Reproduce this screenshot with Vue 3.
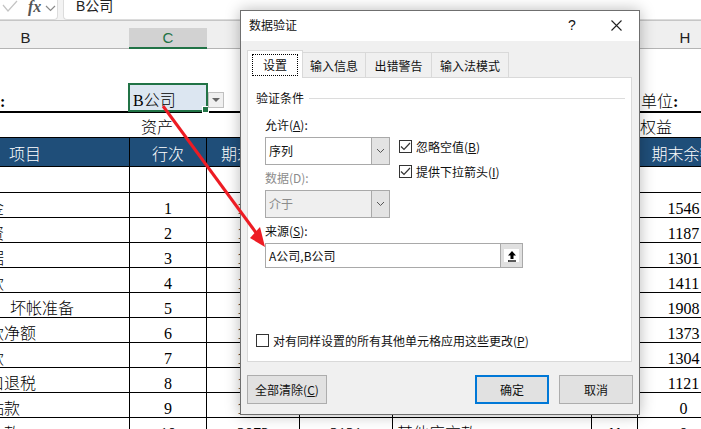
<template>
  <div class="sheet">
    <div class="topbar">
      <div class="fx-box">
        <svg class="tick" width="16" height="12" viewBox="0 0 16 12"><path d="M1 5l5 6 9-10" fill="none" stroke="#c4c4c4" stroke-width="1.2" /></svg>
        <span class="fx">fx</span>
        <svg class="chev" width="11" height="7" viewBox="0 0 11 7"><path d="M1 1l4.5 4.5L10 1" fill="none" stroke="#8a8a8a" stroke-width="1.2" /></svg>
      </div>
      <div class="formula">B公司</div>
    </div>

    <div class="grid colhead">
      <div v-for="c in columns" :key="c" class="col-label" :class="{ on: c === 'C' }">{{ c }}</div>
    </div>

    <div class="table">
      <div class="grid title-row">
        <div class="company">编制单位<b>:</b></div>
        <div class="picked-wrap">
          <div class="picked">
            B公司
            <span class="handle"></span>
            <span class="drop"><i></i></span>
          </div>
        </div>
        <div></div><div></div><div></div><div></div>
        <div class="unit">单位<b>:</b></div>
      </div>

      <div class="grid group-row">
        <div></div>
        <div class="assets">资产</div>
        <div></div><div></div><div></div><div></div>
        <div class="rights">权益</div>
      </div>

      <div class="grid head-row">
        <div class="ctr">项目</div>
        <div class="ctr">行次</div>
        <div class="ctr">期末余额</div>
        <div class="ctr">年初余额</div>
        <div class="ctr">负债及权益</div>
        <div class="ctr">行次</div>
        <div class="ctr last">期末余额</div>
      </div>

      <div class="grid row blank">
        <div v-for="n in 7" :key="n"></div>
      </div>

      <div v-for="r in rows" :key="r.no" class="grid row">
        <div class="name" :class="{ indent: r.indent }">{{ r.name }}</div>
        <div class="ctr">{{ r.no }}</div>
        <div class="ctr">{{ r.d }}</div>
        <div class="ctr">{{ r.e }}</div>
        <div class="name-f">{{ r.f }}</div>
        <div class="ctr strong">{{ r.g }}</div>
        <div class="ctr last">{{ r.h }}</div>
      </div>
    </div>

    <div class="dialog">
      <div class="dlg-title">
        <span>数据验证</span>
        <span class="help">?</span>
        <svg class="close" width="11" height="11" viewBox="0 0 11 11"><path d="M.5.5l10 10M10.5.5l-10 10" stroke="#222" stroke-width="1.1" /></svg>
      </div>

      <div class="dlg-body">
        <div class="tabs">
          <div class="tab active"><span>设置</span></div>
          <div class="tab w2">输入信息</div>
          <div class="tab w3">出错警告</div>
          <div class="tab w4">输入法模式</div>
        </div>

        <div class="panel">
          <div class="legend"><span>验证条件</span><i></i></div>

          <div class="form">
            <div class="two">
              <div class="left">
                <div class="lbl first">允许(<u>A</u>):</div>
                <div class="select">
                  <span>序列</span>
                  <span class="sel-btn"><svg width="9" height="6" viewBox="0 0 9 6"><path d="M1 1l3.500 3.500L8 1" fill="none" stroke="#555" stroke-width="1" /></svg></span>
                </div>
                <div class="lbl grey">数据(D):</div>
                <div class="select off">
                  <span>介于</span>
                  <span class="sel-btn"><svg width="9" height="6" viewBox="0 0 9 6"><path d="M1 1l3.500 3.500L8 1" fill="none" stroke="#555" stroke-width="1" /></svg></span>
                </div>
              </div>
              <div class="right">
                <div class="check">
                  <span class="box"><svg width="11" height="9" viewBox="0 0 11 9"><path d="M1 4.500l3 3 6-6.500" fill="none" stroke="#333" stroke-width="1.200" /></svg></span>
                  <span>忽略空值(<u>B</u>)</span>
                </div>
                <div class="check">
                  <span class="box"><svg width="11" height="9" viewBox="0 0 11 9"><path d="M1 4.500l3 3 6-6.500" fill="none" stroke="#333" stroke-width="1.200" /></svg></span>
                  <span>提供下拉箭头(<u>I</u>)</span>
                </div>
              </div>
            </div>

            <div class="lbl">来源(<u>S</u>):</div>
            <div class="source">
              <span class="src-text">A公司,B公司</span>
              <span class="src-btn">
                <span>
                  <svg width="10" height="12" viewBox="0 0 10 12"><path d="M5 1L1 5.500h2.500V9h3V5.500H9z" fill="#000" /><path d="M1 11h8" stroke="#000" stroke-width="1.300" /></svg>
                </span>
              </span>
            </div>
          </div>

          <div class="check apply">
            <span class="box"></span>
            <span>对有同样设置的所有其他单元格应用这些更改(<u>P</u>)</span>
          </div>
        </div>

        <div class="buttons">
          <div class="btn clear">全部清除(<u>C</u>)</div>
          <div class="btn ok">确定</div>
          <div class="btn">取消</div>
        </div>
      </div>
    </div>

    <svg class="arrow" width="701" height="429" viewBox="0 0 701 429">
      <path d="M163 106L257 234" stroke="#ed1c24" stroke-width="3" fill="none" />
      <path d="M265 247L250 238 260 227z" fill="#ed1c24" />
    </svg>
  </div>
</template>

<script setup>
const columns = ["B", "C", "D", "E", "F", "G", "H"];

const rows = [
  { no: 1, name: "货币资金", d: "1258", e: "1146", f: "", g: "", h: "1546" },
  { no: 2, name: "短期投资", d: "1187", e: "1032", f: "", g: "", h: "1187" },
  { no: 3, name: "应收票据", d: "1301", e: "1240", f: "", g: "", h: "1301" },
  { no: 4, name: "应收账款", d: "1411", e: "1325", f: "", g: "", h: "1411" },
  { no: 5, name: "坏帐准备", indent: true, d: "1908", e: "1766", f: "", g: "", h: "1908" },
  { no: 6, name: "应收账款净额", d: "1373", e: "1290", f: "", g: "", h: "1373" },
  { no: 7, name: "预付账款", d: "1304", e: "1211", f: "", g: "", h: "1304" },
  { no: 8, name: "应收出口退税", d: "1121", e: "1087", f: "", g: "", h: "1121" },
  { no: 9, name: "应收补贴款", d: "1056", e: "1002", f: "", g: "", h: "0" },
  { no: 10, name: "其他应收款", d: "2073", e: "2121", f: "其他应交款", g: "11", h: "0" },
];
</script>

<style>
html,
body {
  margin: 0;
  background: #fff;
}
</style>

<style scoped>
.sheet {
  position: relative;
  width: 701px;
  height: 429px;
  overflow: hidden;
  background: #fff;
  font-family: "Liberation Serif", "Noto Sans CJK SC", serif;
  font-size: 16px;
  font-weight: 300;
  color: #000;
}

.topbar {
  display: flex;
  gap: 5px;
  height: 20px;
  background: #f3f3f3;
}
.fx-box {
  display: flex;
  align-items: flex-start;
  width: 58px;
  height: 20px;
  box-sizing: border-box;
  background: #fff;
  border: 1px solid #dcdcdc;
  border-width: 0 1px 1px 0;
  border-bottom-right-radius: 4px;
}
.tick {
  margin-left: 2px;
}
.fx {
  margin-left: 10px;
  font-family: "Liberation Serif", serif;
  font-style: italic;
  font-weight: 700;
  font-size: 16px;
  line-height: 14px;
  color: #555;
}
.chev {
  margin: 5px 0 0 4px;
}
.formula {
  flex: 1;
  height: 20px;
  box-sizing: border-box;
  padding-left: 12px;
  background: #fff;
  border: 1px solid #dcdcdc;
  border-width: 0 0 1px 1px;
  border-bottom-left-radius: 4px;
  font-family: "Liberation Sans", "Noto Sans CJK SC", sans-serif;
  font-size: 14px;
  font-weight: 400;
  line-height: 13px;
  color: #222;
}

/* B列左边超出了画面 */
.grid {
  display: grid;
  grid-template-columns: 209px 77px 93px 93px 199px 46px 94px;
  width: 811px;
  margin-left: -79px;
}
.ctr {
  text-align: center;
}
.last {
  padding-right: 2px;
}

.colhead {
  height: 29px;
  box-sizing: border-box;
  background: #efefef;
  border-top: 1px solid #c6c6c6;
  border-bottom: 1px solid #b4b4b4;
}
.col-label {
  margin-top: 7px;
  height: 21px;
  box-sizing: border-box;
  line-height: 20px;
  text-align: center;
  font-family: "Liberation Sans", sans-serif;
  font-size: 15px;
  font-weight: 400;
  color: #222;
}
.col-label.on {
  margin-left: -1px;
  background: #d2d2d2;
  border-bottom: 2px solid #217346;
  color: #217346;
}

.title-row {
  height: 64px;
  box-sizing: border-box;
  border-bottom: 2px solid #000;
  align-items: end;
  line-height: 18px;
}
.title-row b {
  font-weight: 700;
}
.company {
  padding-left: 15px;
}
.picked-wrap {
  align-self: stretch;
  display: flex;
  align-items: flex-end;
}
.picked {
  position: relative;
  flex: none;
  width: 80px;
  height: 29px;
  margin: 0 0 -1px -2px;
  box-sizing: border-box;
  padding: 7px 0 0 3px;
  line-height: 18px;
  background: #dce6f1;
  border: 2px solid #217346;
}
.handle {
  position: absolute;
  right: -3px;
  bottom: -3px;
  width: 5px;
  height: 5px;
  background: #217346;
  border: 1px solid #fff;
}
.drop {
  position: absolute;
  left: 78px;
  top: 7px;
  width: 16px;
  height: 16px;
  box-sizing: border-box;
  background: #f0f0f0;
  border: 1px solid #c0c0c0;
}
.drop i {
  position: absolute;
  left: 3px;
  top: 5px;
  border: 4px solid transparent;
  border-top: 4px solid #666;
  border-bottom-width: 0;
}
.unit {
  padding-left: 3px;
}

.group-row {
  height: 24px;
  line-height: 30px;
}
.assets {
  padding-left: 11px;
  white-space: nowrap;
}
.rights {
  white-space: nowrap;
  padding-left: 2px;
}

.head-row {
  height: 30px;
  box-sizing: border-box;
  background: #1f4e79;
  color: #fff;
  line-height: 33px;
  border-top: 1px solid #000;
  border-bottom: 1px solid #000;
}
.head-row > div {
  border-right: 1px solid #000;
  height: 28px;
  overflow: hidden;
}

.row {
  height: 25px;
  box-sizing: border-box;
  border-bottom: 1px solid #000;
}
.row.blank {
  height: 26px;
}
.row > div {
  box-sizing: border-box;
  padding-top: 4px;
  line-height: 24px;
  border-right: 1px solid #000;
  white-space: nowrap;
  overflow: hidden;
}
.name {
  padding-left: 19px;
}
.name.indent {
  padding-left: 89px;
}
.name-f {
  padding-left: 4px;
}
.strong {
  font-weight: 700;
}

.dialog {
  position: absolute;
  left: 240px;
  top: 10px;
  width: 400px;
  height: 405px;
  box-sizing: border-box;
  display: flex;
  flex-direction: column;
  background: #f0f0f0;
  border: 1px solid #6f6f6f;
  box-shadow: 0 0 14px rgba(0, 0, 0, 0.28);
  font-family: "Noto Sans CJK SC", "Liberation Sans", sans-serif;
  font-size: 12px;
  font-weight: 400;
  color: #111;
}
.dlg-title {
  position: relative;
  height: 30px;
  flex: none;
  padding-left: 8px;
  background: #fff;
  line-height: 28px;
}
.help {
  position: absolute;
  left: 327px;
  top: 0;
  font-family: "Liberation Sans", sans-serif;
  font-size: 14px;
}
.close {
  position: absolute;
  left: 370px;
  top: 9px;
}
.dlg-body {
  flex: 1;
  display: flex;
  flex-direction: column;
  padding: 9px 6px 10px 6px;
}

.tabs {
  display: flex;
  align-items: flex-end;
  height: 27px;
}
.tab {
  height: 25px;
  box-sizing: border-box;
  border: 1px solid #d9d9d9;
  border-bottom: 0;
  border-left: 0;
  text-align: center;
  line-height: 25px;
  background: #f0f0f0;
}
.tab.active {
  position: relative;
  z-index: 1;
  width: 56px;
  height: 28px;
  margin-bottom: -1px;
  padding: 3px 4px 0;
  background: #fff;
  border-left: 1px solid #d9d9d9;
}
.tab.active span {
  display: block;
  height: 22px;
  line-height: 20px;
  box-sizing: border-box;
  border: 1px dotted #000;
}
.w2 {
  width: 63px;
}
.w3 {
  width: 66px;
}
.w4 {
  width: 77px;
}

.panel {
  flex: 1;
  display: flex;
  flex-direction: column;
  box-sizing: border-box;
  width: 385px;
  background: #fff;
  border: 1px solid #d9d9d9;
}
.legend {
  display: flex;
  align-items: center;
  gap: 5px;
  height: 16px;
  margin: 12px 6px 0 8px;
  line-height: 16px;
}
.legend i {
  flex: 1;
  height: 1px;
  background: #dcdcdc;
}
.form {
  padding-left: 17px;
}
.two {
  display: flex;
  gap: 9px;
}
.left {
  width: 125px;
}
.right {
  display: flex;
  flex-direction: column;
  gap: 12px;
  padding-top: 34px;
}
.lbl {
  height: 16px;
  margin: 5px 0 4px;
  line-height: 16px;
}
.lbl.first {
  margin-top: 11px;
}
.grey {
  color: #8c8c8c;
}
.select {
  display: flex;
  justify-content: space-between;
  height: 28px;
  box-sizing: border-box;
  padding-left: 3px;
  line-height: 26px;
  background: #fff;
  border: 1px solid #a9a9a9;
}
.select.off {
  background: #efefef;
  color: #8c8c8c;
}
.sel-btn {
  display: flex;
  align-items: center;
  justify-content: center;
  width: 17px;
  background: #e3e3e3;
  border-left: 1px solid #a9a9a9;
}
.check {
  display: flex;
  align-items: center;
  gap: 4px;
  height: 13px;
  line-height: 13px;
  white-space: nowrap;
}
.box {
  display: flex;
  align-items: center;
  justify-content: center;
  width: 13px;
  height: 13px;
  box-sizing: border-box;
  border: 1px solid #333;
  background: #fff;
}
.apply {
  margin: auto 0 14px 8px;
}
.source {
  display: flex;
  justify-content: space-between;
  width: 258px;
  height: 25px;
  box-sizing: border-box;
  border: 1px solid #a9a9a9;
}
.src-text {
  padding-left: 3px;
  line-height: 23px;
}
.src-btn {
  display: flex;
  align-items: center;
  justify-content: center;
  width: 21px;
  background: #e0e0e0;
  border-left: 1px solid #a9a9a9;
}
.src-btn span {
  display: flex;
  align-items: center;
  justify-content: center;
  width: 15px;
  height: 13px;
  background: #fff;
}

.buttons {
  display: flex;
  gap: 10px;
  margin-top: 13px;
}
.btn {
  width: 74px;
  height: 29px;
  box-sizing: border-box;
  text-align: center;
  line-height: 27px;
  background: #e1e1e1;
  border: 1px solid #adadad;
}
.clear {
  width: 80px;
  margin-right: auto;
}
.ok {
  line-height: 25px;
  border: 2px solid #0078d7;
}

.arrow {
  position: absolute;
  left: 0;
  top: 0;
  pointer-events: none;
}
</style>
